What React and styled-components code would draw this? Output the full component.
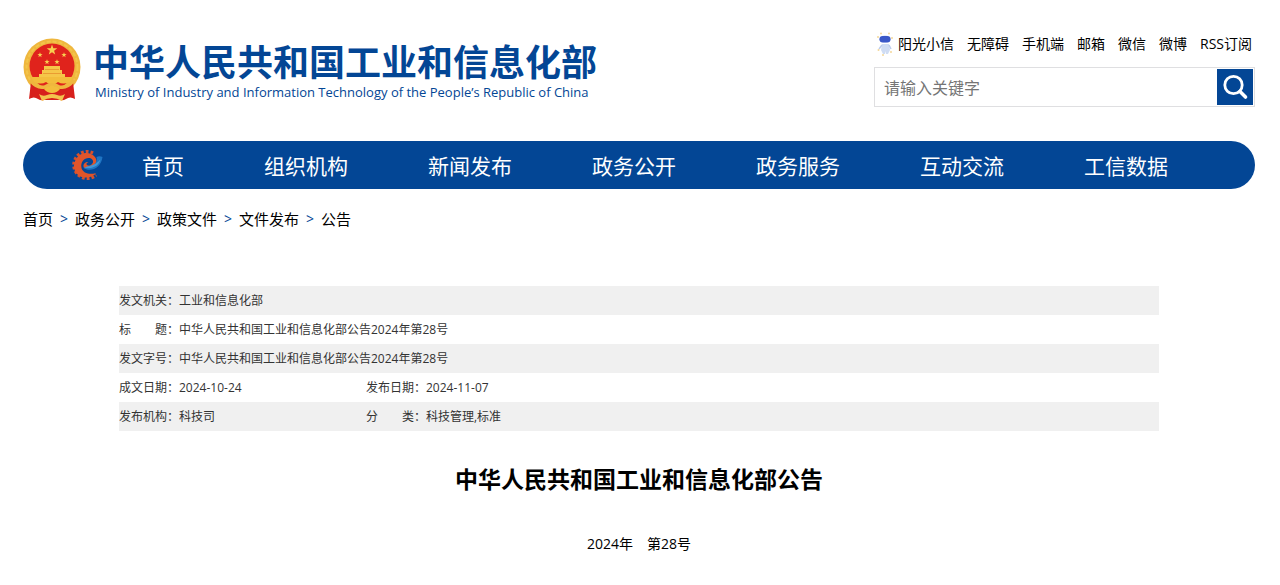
import React from 'react';
import styled, { createGlobalStyle } from 'styled-components';

const BLUE = '#034695';

const GlobalStyle = createGlobalStyle`
    * {
        box-sizing: border-box;
    }

    body {
        margin: 0;
        background: #fff;
        color: #000;
        font-family: "Open Sans", "Noto Sans CJK SC", sans-serif;
    }

    a {
        color: inherit;
        text-decoration: none;
    }
`;

const Page = styled.div`
    padding: 32px 25px 24px 23px;
`;

const Header = styled.header`
    display: flex;
    justify-content: space-between;
    align-items: flex-start;
`;

const Brand = styled.a`
    display: flex;
    align-items: flex-start;
    gap: 12px;
    padding-top: 5px;
    color: ${BLUE};
`;

const BrandName = styled.span`
    display: block;
    padding-top: 4px;
    font-size: 36px;
    line-height: 44px;
    font-weight: bold;
    white-space: nowrap;
`;

const BrandEnglish = styled.span`
    display: block;
    padding-left: 2px;
    font-size: 13px;
    line-height: 14px;
    font-weight: 500;
    white-space: nowrap;
`;

const Tools = styled.div`
    width: 381px;
`;

const QuickLinks = styled.nav`
    display: flex;
    align-items: center;
    justify-content: flex-end;
    gap: 13px;
    height: 24px;
    padding-right: 3px;
    font-size: 14px;
    line-height: 24px;
    white-space: nowrap;
`;

const QuickLink = styled.a`
    display: flex;
    align-items: center;
    gap: 5px;
`;

const SearchForm = styled.form`
    display: flex;
    align-items: center;
    height: 40px;
    margin-top: 11px;
    padding-right: 1px;
    border: 1px solid #dfdfe1;
`;

const SearchInput = styled.input`
    flex: 1;
    min-width: 0;
    height: 100%;
    padding: 2px 9px 0;
    border: none;
    outline: none;
    background: none;
    font-family: inherit;
    font-size: 16px;

    &::placeholder {
        color: #757575;
    }
`;

const SearchButton = styled.button`
    display: flex;
    align-items: center;
    justify-content: center;
    width: 36px;
    height: 36px;
    padding: 0;
    border: none;
    background: ${BLUE};
    cursor: pointer;
`;

const MainNav = styled.nav`
    display: flex;
    align-items: center;
    gap: 80px;
    height: 48px;
    margin-top: 34px;
    padding-left: 48px;
    border-radius: 24px;
    background: ${BLUE};
    color: #fff;
    font-size: 21px;
    white-space: nowrap;
`;

const NavHome = styled.div`
    display: flex;
    align-items: center;
    gap: 39px;
`;

const Breadcrumb = styled.nav`
    display: flex;
    gap: 7px;
    margin-top: 18px;
    font-size: 15px;
    line-height: 24px;
`;

const Separator = styled.span`
    width: 8px;
    color: ${BLUE};
    font-size: 14px;
    text-align: center;
`;

const Article = styled.main`
    margin: 55px 96px 0;
`;

const InfoTable = styled.table`
    width: 100%;
    border-collapse: collapse;
    table-layout: fixed;
    color: #333;
    font-size: 12px;
    line-height: 17px;
`;

const InfoRow = styled.tr`
    background: ${({ $shaded }) => ($shaded ? '#f0f0f0' : 'none')};
`;

const InfoLabel = styled.th`
    padding: 6px 0;
    font-weight: normal;
    text-align: left;
    white-space: nowrap;
`;

const InfoValue = styled.td`
    padding: 6px 0;
`;

const Title = styled.h1`
    margin: 31px 0 0;
    font-size: 23px;
    line-height: 34px;
    text-align: center;
`;

const Issue = styled.p`
    margin: 36px 0 0;
    font-size: 14px;
    line-height: 24px;
    text-align: center;
`;

const quickLinks = ['无障碍', '手机端', '邮箱', '微信', '微博', 'RSS订阅'];
const sections = ['组织机构', '新闻发布', '政务公开', '政务服务', '互动交流', '工信数据'];
const crumbs = ['首页', '政务公开', '政策文件', '文件发布', '公告'];

const info = [
    [['发文机关：', '工业和信息化部']],
    [['标　　题：', '中华人民共和国工业和信息化部公告2024年第28号']],
    [['发文字号：', '中华人民共和国工业和信息化部公告2024年第28号']],
    [['成文日期：', '2024-10-24'], ['发布日期：', '2024-11-07']],
    [['发布机构：', '科技司'], ['分　　类：', '科技管理,标准']],
];

const STAR = 'M0-5 1.2-1.6 4.8-1.5 1.9.6 2.9 4 0 2-2.9 4-1.9.6-4.8-1.5-1.2-1.6Z';

const Emblem = () => (
    <svg width="58" height="66" viewBox="0 0 58 66" aria-hidden="true">
        <circle cx="29" cy="30" r="28.5" fill="#efb73e" />
        <circle cx="29" cy="30" r="25.5" fill="none" stroke="#f3c54a" strokeWidth="2" strokeDasharray="4 2" />
        <circle cx="29" cy="29" r="22.5" fill="#e0231c" />
        <path d="M8 45q7 8 14 6l7 2 7-2q7 2 14-6l2 17q-5-3-9 0-3 2-6 1H21q-3 1-6-1-4-3-9 0Z" fill="#d7201c" />
        <path d="M8 40h42l-3 5q-7 3-12 0-6 5-12 0-5 3-12 0Z" fill="#f3bd3c" />
        <path d="M16 37h26v3H16Zm3-4h20v4H19Zm2-4h16v4H21Z" fill="#f6c649" />
        <path d="M20 36.500h18M22 32.500h14" stroke="#e58a28" strokeWidth=".7" />
        <g fill="#f8cf50">
            <path d={STAR} transform="translate(29 13) scale(1.1)" />
            <path d={STAR} transform="translate(17 18) scale(.55)" />
            <path d={STAR} transform="translate(41 18) scale(.55)" />
            <path d={STAR} transform="translate(24 25) scale(.55)" />
            <path d={STAR} transform="translate(34 25) scale(.55)" />
        </g>
        <path d="M7 43q7 9 15 7 7-5 14 0 8 2 15-7" fill="none" stroke="#efb73e" strokeWidth="3.500" />
        <path d="M21 52q8-7 16 0-3 4-8 4t-8-4Z" fill="#f3bd3c" />
        <path d="M16 57q4 3 8 1 5-2 10 0 4 2 8-1l-3 7q-5-3-10-3t-10 3Z" fill="#f3c34e" />
    </svg>
);

const Robot = () => (
    <svg width="16" height="24" viewBox="0 0 16 24" aria-hidden="true">
        <path d="M2 7a6.500 5.500 0 0 1 12 0 6.500 5.500 0 0 1-12 0Z" fill="#c5d3f3" />
        <rect x="2.500" y="4" width="11" height="6.500" rx="3.200" fill="#3b58c8" />
        <path d="M5 12h7l1 6-2 4H9l-.5-3-.5 3H6l-2-4Z" fill="#cfdcf3" />
        <path d="m5 13-3 4M12 13l2 4" stroke="#bccdec" strokeWidth="1.500" />
        <g fill="#f3d79a">
            <circle cx="4" cy="1.500" r="1" />
            <circle cx="12" cy="1.500" r="1" />
            <circle cx="1" cy="5" r="1" />
            <circle cx="15" cy="6" r="1" />
            <circle cx="1.500" cy="18" r="1" />
            <circle cx="14" cy="20" r="1" />
            <circle cx="6" cy="23" r="1" />
        </g>
    </svg>
);

const GearLogo = () => (
    <svg width="32" height="32" viewBox="0 0 32 32" aria-hidden="true">
        <path d="M22 4A13.300 13.300 0 1 0 25 26" fill="none" stroke="#d9502b" strokeWidth="3.500" strokeDasharray="2.700 2" />
        <path
            d="M23.500 7.500C19 2 9 3 5 10 0 19 5 28 14 28.500c5 .3 9-1.500 11-4.500-6 2-13 .5-14.500-5C9 12 15 7.500 20 9.500c3 1.500 2.500 5 0 6.500-2 1-4.500.5-4.500-1 0-1 1-1.500 2-2-3-.5-5.500 2-5 4.500.6 3 6 3 9.500 0 4-3 4.500-7 1.500-10Z"
            fill="#e0552a"
        />
        <path d="M12 18.500c7 5.500 18 1 19.500-10.500-2-1-4-1-6 0 2 6-5 12-13.500 10.500Z" fill="#1f74c2" />
        <path d="M13.500 18.500c7 2 14-1 16-8-3 3.500-7 5.500-11 6.500-2 .5-4 .8-5 1.500Z" fill="#3f97d8" />
    </svg>
);

const SearchIcon = () => (
    <svg width="28" height="28" viewBox="0 0 28 28" fill="none" stroke="#fff" aria-hidden="true">
        <circle cx="12.500" cy="12" r="8.700" strokeWidth="2.800" />
        <path d="m19 18.500 5.500 5.500" strokeWidth="3.600" strokeLinecap="round" />
    </svg>
);

const App = () => (
    <>
        <GlobalStyle />
        <Page>
            <Header>
                <Brand href="#">
                    <Emblem />
                    <span>
                        <BrandName>中华人民共和国工业和信息化部</BrandName>
                        <BrandEnglish>Ministry of Industry and Information Technology of the People’s Republic of China</BrandEnglish>
                    </span>
                </Brand>
                <Tools>
                    <QuickLinks>
                        <QuickLink href="#">
                            <Robot />
                            阳光小信
                        </QuickLink>
                        {quickLinks.map((label) => (
                            <QuickLink key={label} href="#">{label}</QuickLink>
                        ))}
                    </QuickLinks>
                    <SearchForm onSubmit={(e) => e.preventDefault()}>
                        <SearchInput type="text" placeholder="请输入关键字" aria-label="请输入关键字" />
                        <SearchButton type="submit" aria-label="搜索">
                            <SearchIcon />
                        </SearchButton>
                    </SearchForm>
                </Tools>
            </Header>
            <MainNav>
                <NavHome>
                    <GearLogo />
                    <a href="#">首页</a>
                </NavHome>
                {sections.map((label) => (
                    <a key={label} href="#">{label}</a>
                ))}
            </MainNav>
            <Breadcrumb>
                {crumbs.map((label, i) => (
                    <React.Fragment key={label}>
                        {i > 0 && <Separator>&gt;</Separator>}
                        <a href="#">{label}</a>
                    </React.Fragment>
                ))}
            </Breadcrumb>
            <Article>
                <InfoTable>
                    <colgroup>
                        <col width="60" />
                        <col width="187" />
                        <col width="60" />
                        <col />
                    </colgroup>
                    <tbody>
                        {info.map((fields, i) => (
                            <InfoRow key={fields[0][0]} $shaded={i % 2 === 0}>
                                {fields.map(([label, value]) => (
                                    <React.Fragment key={label}>
                                        <InfoLabel scope="row">{label}</InfoLabel>
                                        <InfoValue colSpan={fields.length === 1 ? 3 : 1}>{value}</InfoValue>
                                    </React.Fragment>
                                ))}
                            </InfoRow>
                        ))}
                    </tbody>
                </InfoTable>
                <Title>中华人民共和国工业和信息化部公告</Title>
                <Issue>2024年　第28号</Issue>
            </Article>
        </Page>
    </>
);

export default App;
